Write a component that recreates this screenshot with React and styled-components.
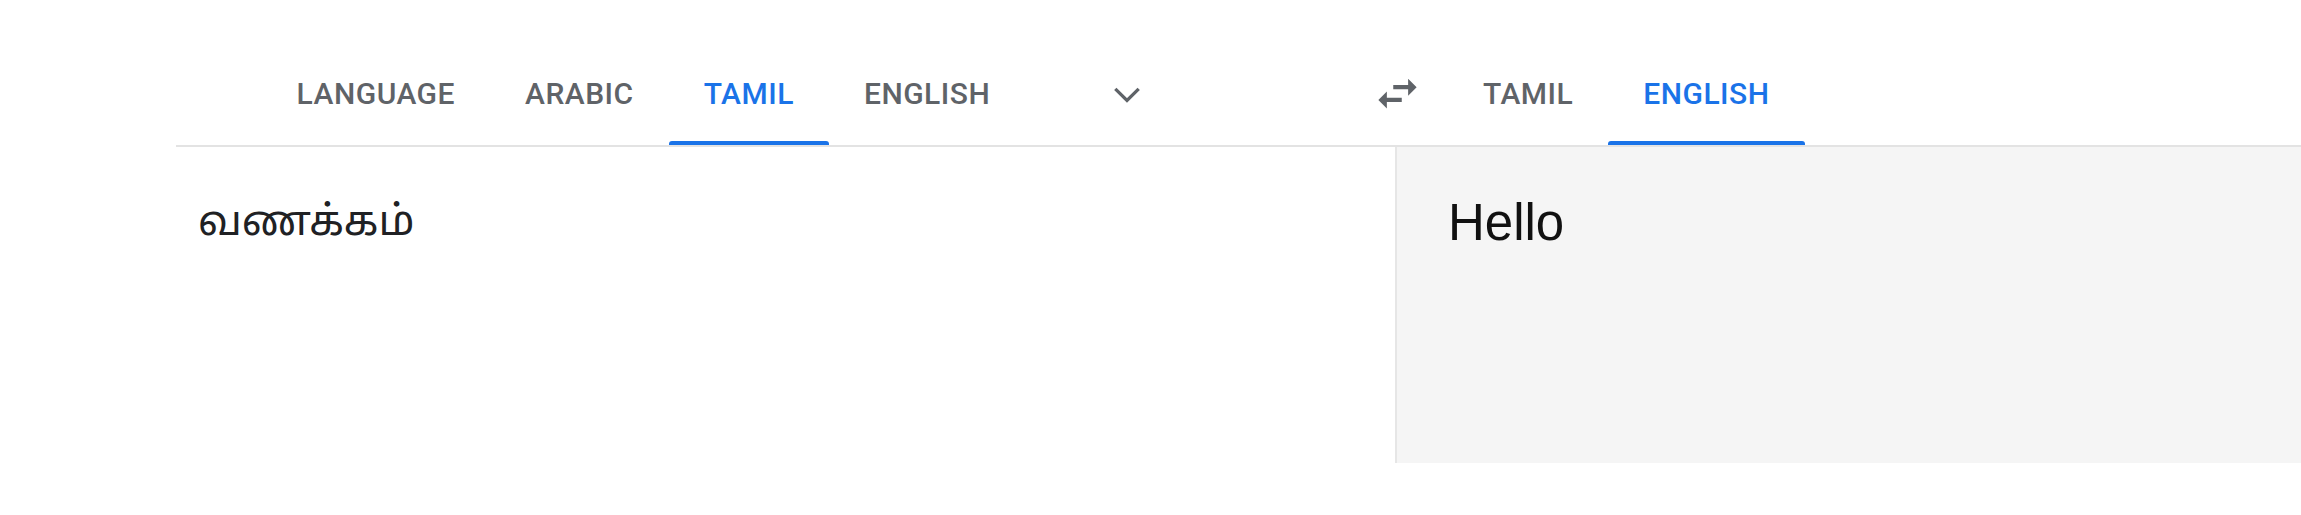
import React from "react";
import styled, { createGlobalStyle } from "styled-components";

const GlobalStyle = createGlobalStyle`
  html, body {
    margin: 0;
    padding: 0;
    background: #ffffff;
    overflow: hidden;
  }
  body {
    width: 2301px;
    height: 515px;
    font-family: Roboto, "Noto Sans", Arial, sans-serif;
  }
`;

const Page = styled.div`
  display: flex;
  flex-direction: column;
  padding-top: 42px;
  padding-left: 176px;
  width: 2301px;
  box-sizing: border-box;
`;

const TabBar = styled.div`
  display: flex;
  align-items: stretch;
  height: 103px;
  border-bottom: 2px solid #e3e3e3;
`;

const LeftBlank = styled.div`
  flex: 0 0 113px;
`;

const TabViewport = styled.div`
  flex: 0 0 ${(p) => p.$width}px;
  display: flex;
  overflow: hidden;
`;

const DetectSlot = styled.div`
  flex: 0 0 201px;
  display: flex;
  justify-content: flex-end;
  overflow: hidden;
`;

const Tab = styled.div`
  position: relative;
  flex: 0 0 auto;
  display: flex;
  align-items: center;
  padding: 0 35px;
  font-family: Roboto, "Noto Sans", Arial, sans-serif;
  font-size: 30px;
  font-weight: 500;
  letter-spacing: 0.5px;
  white-space: nowrap;
  color: ${(p) => (p.$active ? "#1a73e8" : "#5f6368")};

  &::after {
    content: "";
    display: ${(p) => (p.$active ? "block" : "none")};
    position: absolute;
    left: 0;
    right: 0;
    bottom: 0;
    height: 4px;
    border-radius: 3px 3px 0 0;
    background: #1a73e8;
  }
`;

const IconButton = styled.div`
  flex: 0 0 102px;
  display: flex;
  align-items: center;
  justify-content: center;
  margin-left: ${(p) => p.$offset || 0}px;
  color: #5f6368;

  svg {
    width: ${(p) => p.$size}px;
    height: ${(p) => p.$size}px;
  }
`;

const Panels = styled.div`
  display: flex;
  height: 316px;
`;

const SourcePanel = styled.div`
  flex: 0 0 1219px;
  box-sizing: border-box;
  padding: 44px 22px;
  font-family: "Noto Sans Tamil", "Lohit Tamil", "Noto Sans", sans-serif;
  font-size: 42px;
  line-height: 68px;
  color: #202124;
`;

const TargetPanel = styled.div`
  flex: 1 1 auto;
  box-sizing: border-box;
  background: #f5f5f5;
  border-left: 2px solid #e6e6e6;
  padding: 42px 51px;
  font-family: "Liberation Sans", Arial, sans-serif;
  font-size: 51px;
  line-height: 68px;
  color: #111111;
`;

const ExpandMore = () => (
  <svg viewBox="0 0 24 24" fill="none" stroke="currentColor" strokeWidth="1.5">
    <polyline points="6.6,9.6 12,15 17.4,9.6" />
  </svg>
);

const SwapHoriz = () => (
  <svg viewBox="0 0 24 24" fill="currentColor">
    <path d="M6.99 11L3 15l3.99 4v-3H14v-2H6.99v-3zM21 9l-4-4v3H10v2h7v3l4-4z" />
  </svg>
);

const sourceTabs = [
  { label: "ARABIC" },
  { label: "TAMIL", active: true },
  { label: "ENGLISH" },
];

const targetTabs = [
  { label: "TAMIL" },
  { label: "ENGLISH", active: true },
];

export default function App() {
  return (
    <>
      <GlobalStyle />
      <Page>
        <TabBar>
          <LeftBlank />
          <TabViewport $width={787}>
            <DetectSlot>
              <Tab>DETECT LANGUAGE</Tab>
            </DetectSlot>
            {sourceTabs.map((t) => (
              <Tab key={t.label} $active={t.active}>
                {t.label}
              </Tab>
            ))}
          </TabViewport>
          <IconButton $size={52}>
            <ExpandMore />
          </IconButton>
          <IconButton $size={51} $offset={168}>
            <SwapHoriz />
          </IconButton>
          <TabViewport $width={381}>
            {targetTabs.map((t) => (
              <Tab key={t.label} $active={t.active}>
                {t.label}
              </Tab>
            ))}
          </TabViewport>
        </TabBar>
        <Panels>
          <SourcePanel>வணக்கம்</SourcePanel>
          <TargetPanel>Hello</TargetPanel>
        </Panels>
      </Page>
    </>
  );
}
